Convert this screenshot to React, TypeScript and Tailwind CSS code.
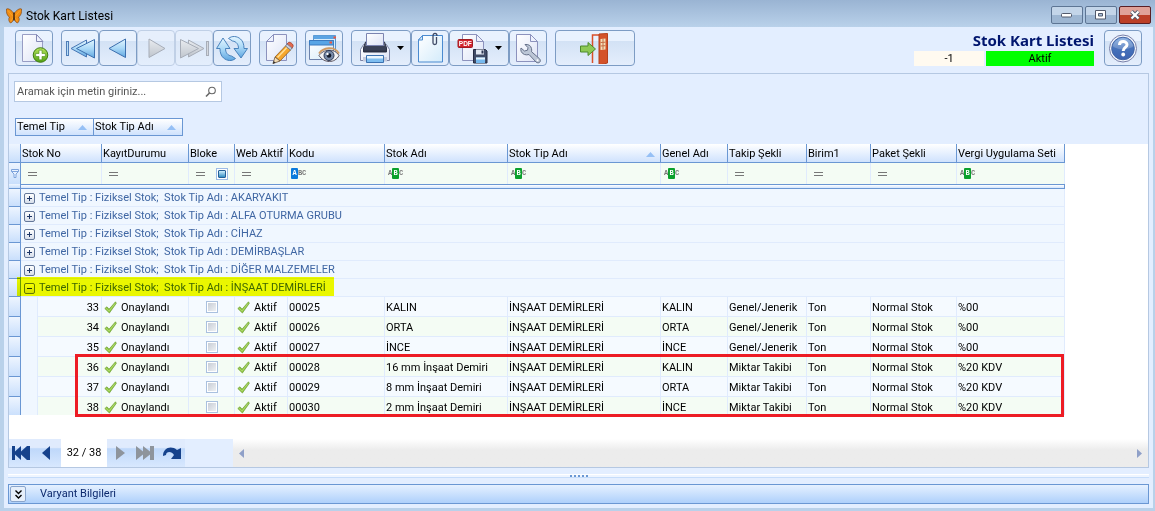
import type { ReactNode } from "react";

const toolButton =
  "flex h-9 items-center justify-center rounded-sm border border-[#7d9cc4] bg-linear-to-b from-[#e9f2fe] from-30% via-[#d3e2f5] via-30% to-[#e4eefc] text-black";
const toolButtonOff =
  "flex h-9 w-[38px] items-center justify-center rounded-sm border border-[#c0d0e6] bg-linear-to-b from-[#e6effc] from-30% via-[#dbe7f7] via-30% to-[#e4eefc]";

function Gradients() {
  return (
    <svg className="absolute size-0" aria-hidden="true">
      <defs>
        <linearGradient id="blue" x1="0" y1="0" x2="0" y2="1">
          <stop offset="0" stopColor="#e4f6ff" />
          <stop offset="0.5" stopColor="#a9d8f7" />
          <stop offset="1" stopColor="#5fa6e0" />
        </linearGradient>
        <linearGradient id="grey" x1="0" y1="0" x2="0" y2="1">
          <stop offset="0" stopColor="#e9ecf0" />
          <stop offset="1" stopColor="#bfc5cd" />
        </linearGradient>
        <linearGradient id="paper" x1="0" y1="0" x2="1" y2="1">
          <stop offset="0" stopColor="#ffffff" />
          <stop offset="1" stopColor="#dde3f6" />
        </linearGradient>
        <linearGradient id="sky" x1="0" y1="0" x2="1" y2="1">
          <stop offset="0" stopColor="#ffffff" />
          <stop offset="1" stopColor="#d3ebfb" />
        </linearGradient>
        <linearGradient id="green" x1="0" y1="0" x2="0" y2="1">
          <stop offset="0" stopColor="#b5e45c" />
          <stop offset="1" stopColor="#52a012" />
        </linearGradient>
        <linearGradient id="dark" x1="0" y1="0" x2="0" y2="1">
          <stop offset="0" stopColor="#7a8296" />
          <stop offset="1" stopColor="#262c40" />
        </linearGradient>
        <linearGradient id="help" x1="0" y1="0" x2="0" y2="1">
          <stop offset="0" stopColor="#7fa9de" />
          <stop offset="0.5" stopColor="#4672bb" />
          <stop offset="1" stopColor="#3d63b0" />
        </linearGradient>
      </defs>
    </svg>
  );
}

function Icon({ children, className = "size-8" }: { children: ReactNode; className?: string }) {
  return (
    <svg viewBox="0 0 32 32" className={className} aria-hidden="true">
      {children}
    </svg>
  );
}

const newIcon = (
  <Icon>
    <path d="M4.500 2.500h14l6 7V29.500h-20z" fill="url(#paper)" stroke="#989dc4" />
    <path d="M18.500 2.500v7h6.500z" fill="#eef2fd" stroke="#8388b5" strokeLinejoin="round" />
    <circle cx="22.500" cy="23" r="7.300" fill="url(#green)" stroke="#3f7d12" />
    <path d="M21 18.200h3v3.300h3.300v3H24v3.300h-3v-3.300h-3.300v-3H21z" fill="#fff" stroke="#4a8d17" strokeWidth=".6" />
  </Icon>
);
const firstIcon = (
  <Icon>
    <rect x="2.500" y="9.500" width="2" height="14" fill="#b9def7" stroke="#4f7db8" />
    <path d="M22.500 8v17L7 16.500z" fill="url(#blue)" stroke="#4877b5" strokeLinejoin="round" />
    <path d="M30.500 7.500v18.500L12.500 16.500z" fill="url(#blue)" stroke="#3c6fae" strokeLinejoin="round" />
  </Icon>
);
const prevIcon = (
  <Icon>
    <path d="M23.500 7v18.500L7 16.500z" fill="url(#blue)" stroke="#3c6fae" strokeLinejoin="round" />
  </Icon>
);
const nextIcon = (
  <Icon>
    <path d="M9 7v18.500L25 16.500z" fill="url(#grey)" stroke="#a7adb8" strokeLinejoin="round" />
  </Icon>
);
const lastIcon = (
  <Icon>
    <rect x="28.500" y="9.500" width="2" height="14" fill="#d4d8de" stroke="#a7adb8" />
    <path d="M10.500 8v17L26 16.500z" fill="url(#grey)" stroke="#a7adb8" strokeLinejoin="round" />
    <path d="M2.500 7.500v18.500L20.500 16.500z" fill="url(#grey)" stroke="#a7adb8" strokeLinejoin="round" />
  </Icon>
);
const refreshIcon = (
  <Icon>
    <g fill="url(#blue)" stroke="#3c78b5" strokeWidth=".9" strokeLinejoin="round">
      <path d="M12.500 6.500C16 3.500 21 4 24.500 7c2.500 2.200 3.500 5.500 3.500 9.500h3.500L25 26l-7-9.500h4.500c0-4-2-7-6-7.500z" />
      <path d="M19.500 26.500c-3.500 3-8.500 2.500-12-.5C5 23.800 4 20.500 4 16.500H.5L7 6l7 10.500H9.500c0 4 2 7 6 7.500z" />
    </g>
  </Icon>
);
const editIcon = (
  <Icon>
    <path d="M11.500 2.500h13V28.500h-20v-19z" fill="url(#paper)" stroke="#8c92bd" />
    <path d="M11.500 2.500v7h-7z" fill="#eef2fd" stroke="#8c92bd" strokeLinejoin="round" />
    <path d="M23.500 14l5 4-10.500 11-5-4z" fill="#f6a62c" stroke="#8b5a1c" strokeWidth=".8" />
    <path d="M25 15.500L15.500 25.500" stroke="#ffe09a" strokeWidth="1.500" />
    <path d="M25 12l1.500-1.500c1.500-1 5.500 2 4.500 4L29.500 17z" fill="#e26a50" stroke="#a23b26" strokeWidth=".8" />
    <path d="M23.500 14l1.500-2 5 4-1.500 2z" fill="#c9d0dc" stroke="#6f7688" strokeWidth=".8" />
    <path d="M13 25l5 4-7 2.500z" fill="#f2dcb5" stroke="#6c5134" strokeWidth=".8" />
    <path d="M11.700 29l2 1.800-3 1z" fill="#333" />
  </Icon>
);
const viewIcon = (
  <Icon>
    <path d="M5.500 3.500h22v20h-22z" fill="#d6ecfb" stroke="#5b93cc" />
    <path d="M5.500 3.500h22v3.500h-22z" fill="#5ba4e3" />
    <path d="M1.500 8.500h24v19h-24z" fill="url(#sky)" stroke="#6d83ad" />
    <path d="M1.500 8.500h24v4.500h-24z" fill="#57a5e6" stroke="#3a7bc0" />
    <path d="M21.500 9.500h2.500v2h-2.500zM25.500 4.500H28v2h-2.500z" fill="#f0543b" />
    <path d="M11 23.500c4-6 15-8 20 0-4 8-15 8-20 0z" fill="#f4f5f8" stroke="#5c5560" />
    <path d="M11 21.500c4-6 15-8 20 0" fill="none" stroke="#cf9a63" strokeWidth="1.800" />
    <circle cx="21" cy="23.500" r="5" fill="#788aa8" stroke="#2c3752" />
    <circle cx="21" cy="23.500" r="2.300" fill="#131a2c" />
    <circle cx="19.500" cy="22" r="1.200" fill="#fff" />
  </Icon>
);
const printIcon = (
  <Icon>
    <path d="M4.500 12.500h23l3 5v11h-29v-11z" fill="url(#paper)" stroke="#7c84a6" />
    <path d="M4 25h24v4.500H4z" fill="#c5cbdd" />
    <path d="M6.500 10h19l2 6v4h-23v-4z" fill="url(#dark)" stroke="#2b3044" />
    <path d="M7.500 1.500h17v12h-17z" fill="url(#paper)" stroke="#7c84b0" />
    <path d="M5 14h22l.5 2.500-2.500 1.500H7l-2.500-1.500z" fill="#3a4157" />
    <path d="M7.500 23.500h17v7h-17z" fill="#7dbdf0" stroke="#3b71b0" />
    <path d="M8 24h16v2.500H8z" fill="#eaf5fe" />
  </Icon>
);
const clipIcon = (
  <Icon>
    <path d="M8.500 3.500h20v26.500h-24v-22z" fill="url(#sky)" stroke="#4b8bd0" />
    <path d="M8.500 3.500v4.500h-4z" fill="#d9edfb" stroke="#4b8bd0" strokeLinejoin="round" />
    <path d="M22.500 5v6c0 2-3.500 2-3.500 0V4c0-3.500 4-3.500 4 0" fill="none" stroke="#3f4a66" strokeWidth="1.300" />
  </Icon>
);
const pdfIcon = (
  <Icon>
    <path d="M5.500 2.500h14l7 7v19h-21z" fill="url(#paper)" stroke="#8c92bd" />
    <path d="M19.500 2.500v7h7z" fill="#eef2fd" stroke="#8c92bd" strokeLinejoin="round" />
    <rect x="1" y="7.500" width="14.500" height="8" rx="1" fill="#d2232c" stroke="#9f1b22" />
    <text x="8.300" y="14" textAnchor="middle" fontFamily="Liberation Sans" fontWeight="700" fontSize="6.500" fill="#fff">
      PDF
    </text>
    <path d="M16.500 17.500h12l1.500 1.500v12h-13.500z" fill="#414b66" stroke="#252c43" />
    <path d="M19 17.500h8v5h-8z" fill="#e3e8f2" />
    <path d="M24.500 18.500h2v3h-2z" fill="#2c3550" />
    <path d="M19 25.500h9v5.500h-9z" fill="#76b9ee" />
    <path d="M19 25.500h9v2h-9z" fill="#e5f3fd" />
  </Icon>
);
const toolsIcon = (
  <Icon>
    <path d="M4.500 2.500h14l7 7V29.500h-21z" fill="url(#paper)" stroke="#8c92bd" />
    <path d="M18.500 2.500v7h7z" fill="#eef2fd" stroke="#8c92bd" strokeLinejoin="round" />
    <path
      d="M13 12.500c3-.5 6 1 6.500 4 .3 1.200.2 2.200 0 3.200l8 7c2.500 3-1 5.500-3.500 3.300l-7-7.500c-3 1-6.500 0-7.800-3-.5-1-.5-2.500-.2-3.500l3.500 3 3-.8.500-2.500z"
      fill="#bcc6d6"
      stroke="#66718a"
      strokeLinejoin="round"
    />
    <circle cx="25.500" cy="28.300" r="1" fill="#fff" />
  </Icon>
);
const exitIcon = (
  <Icon>
    <path d="M13.500 31V3h7" fill="none" stroke="#d9502a" strokeWidth="1.500" />
    <path d="M20 2l8.500-.5v29.500l-8.500 2z" fill="#d4532a" stroke="#b5401d" />
    <path d="M21.500 7l5-.5v11l-5 .5z" fill="#f3dfba" />
    <path d="M24 6.500v11M21.500 10.500l5-.3M21.500 14l5-.3" stroke="#c56d44" />
    <path d="M1.500 14h7.500v-3.500l7.500 6.500-7.500 6.500V20h-7.500z" fill="#8dc955" stroke="#4d8a2c" strokeLinejoin="round" />
  </Icon>
);
const helpIcon = (
  <Icon>
    <circle cx="16" cy="16.500" r="13.500" fill="#f4f7fd" stroke="#777fa8" />
    <circle cx="16" cy="16.500" r="11.300" fill="url(#help)" stroke="#4466a6" />
    <path d="M5.500 14a11 11 0 0 1 21 0c-5 4-15 5-21 0z" fill="#fff" opacity=".2" />
    <path d="M12.500 13c0-4.500 7.500-4.500 7.500-.3 0 2.800-3.800 2.800-3.800 6.300" fill="none" stroke="#fff" strokeWidth="3" />
    <circle cx="16.200" cy="22.500" r="1.900" fill="#fff" />
  </Icon>
);

const Caret = () => (
  <svg viewBox="0 0 7 4" className="h-1 w-[7px]" aria-hidden="true">
    <path d="M0 0h7L3.500 4z" fill="#000" />
  </svg>
);

function Tool({ label, children, wide = "w-[38px]" }: { label: string; children: ReactNode; wide?: string }) {
  return (
    <button type="button" aria-label={label} className={`${toolButton} ${wide}`}>
      {children}
    </button>
  );
}

const SortArrow = () => (
  <svg viewBox="0 0 9 5" className="h-[5px] w-[9px] shrink-0" aria-hidden="true">
    <path d="M4.500 0L9 5H0z" fill="#96c0f5" />
  </svg>
);

const Equals = () => (
  <svg viewBox="0 0 9 4" className="h-1 w-[9px]" aria-hidden="true">
    <path d="M0 .5h9M0 3.500h9" stroke="#777" />
  </svg>
);

function Abc({ start = false }: { start?: boolean }) {
  const plain = "w-1 text-center text-[#777]";
  return (
    <span className="flex h-[11px] items-center font-['Liberation_Mono'] text-[7px] leading-[11px] font-bold">
      <span className={start ? "w-[7px] rounded-[1px] bg-[#0b7bdc] text-center text-white" : plain}>A</span>
      <span className={start ? plain : "w-[7px] rounded-[1px] bg-[#0ba02c] text-center text-white"}>B</span>
      <span className={plain}>C</span>
    </span>
  );
}

const Tick = () => (
  <svg viewBox="0 0 13 13" className="size-[13px] shrink-0" aria-hidden="true">
    <path d="M.8 7.500L3 5.800l2 2.400L11.500.8l.8 1.500L5.400 12z" fill="#8dc63f" stroke="#6d9f35" strokeWidth=".7" strokeLinejoin="round" />
    <path d="M2 7.200l3 3L11 2.500" fill="none" stroke="#bfe07f" strokeWidth=".7" />
  </svg>
);

type Column = { title: string; filter: "eq" | "box" | "abc" | "start"; sorted?: boolean; span?: number };

const columns: Column[] = [
  { title: "Stok No", filter: "eq", span: 2 },
  { title: "KayıtDurumu", filter: "eq" },
  { title: "Bloke", filter: "box" },
  { title: "Web Aktif", filter: "eq" },
  { title: "Kodu", filter: "start" },
  { title: "Stok Adı", filter: "abc" },
  { title: "Stok Tip Adı", filter: "abc", sorted: true },
  { title: "Genel Adı", filter: "abc" },
  { title: "Takip Şekli", filter: "eq" },
  { title: "Birim1", filter: "eq" },
  { title: "Paket Şekli", filter: "eq" },
  { title: "Vergi Uygulama Seti", filter: "abc" },
];

const groups = ["AKARYAKIT", "ALFA OTURMA GRUBU", "CİHAZ", "DEMİRBAŞLAR", "DİĞER MALZEMELER", "İNŞAAT DEMİRLERİ"];

const rows = [
  { no: 33, code: "00025", name: "KALIN", general: "KALIN", track: "Genel/Jenerik", tax: "%00" },
  { no: 34, code: "00026", name: "ORTA", general: "ORTA", track: "Genel/Jenerik", tax: "%00" },
  { no: 35, code: "00027", name: "İNCE", general: "İNCE", track: "Genel/Jenerik", tax: "%00" },
  { no: 36, code: "00028", name: "16 mm İnşaat Demiri", general: "KALIN", track: "Miktar Takibi", tax: "%20 KDV" },
  { no: 37, code: "00029", name: "8 mm İnşaat Demiri", general: "ORTA", track: "Miktar Takibi", tax: "%20 KDV" },
  { no: 38, code: "00030", name: "2 mm İnşaat Demiri", general: "İNCE", track: "Miktar Takibi", tax: "%20 KDV" },
];

const indicator = "border-r border-b border-[#6a97d3] bg-linear-to-b from-[#eef5ff] to-[#c9dffc] p-0";
const cell = "border-r border-b border-[#e0ebfd] pt-0.5 pr-0.5 pb-0 pl-px whitespace-nowrap";

function Grid() {
  return (
    <table className="w-[1056px] table-fixed border-separate border-spacing-0 leading-4">
      <colgroup>
        <col className="w-3" />
        <col className="w-[17px]" />
        <col className="w-16" />
        <col className="w-[87px]" />
        <col className="w-[46px]" />
        <col className="w-[53px]" />
        <col className="w-[97px]" />
        <col className="w-[123px]" />
        <col className="w-[153px]" />
        <col className="w-[67px]" />
        <col className="w-[79px]" />
        <col className="w-16" />
        <col className="w-[86px]" />
        <col className="w-[108px]" />
      </colgroup>
      <thead>
        <tr className="h-[19px]">
          <td className={indicator} />
          {columns.map((c) => (
            <th
              key={c.title}
              scope="col"
              colSpan={c.span}
              className="border-r border-b border-[#6a97d3] bg-linear-to-b from-white to-[#cfe2fd] px-px pt-0.5 pb-0 text-left font-normal whitespace-nowrap"
            >
              <span className="flex items-center justify-between pr-1">
                {c.title}
                {c.sorted && <SortArrow />}
              </span>
            </th>
          ))}
        </tr>
        <tr className="h-[21px]">
          <td className="border-r border-[#6a97d3] bg-linear-to-b from-[#eef5ff] to-[#c9dffc] p-0">
            <svg viewBox="0 0 8 9" className="ml-0.5 h-[9px] w-2" aria-hidden="true">
              <path d="M.5.5h7v2L5 5v3.500H3V5L.5 2.500zM.5 2.500h7" fill="#e9f2ff" stroke="#7ea4dc" />
            </svg>
          </td>
          {columns.map((c) => (
            <td key={c.title} colSpan={c.span} className="border-r border-[#e0ebfd] bg-[#f4fcf4] py-0 pr-1.5 pl-[3px]">
              <span className="flex items-center justify-between">
                {c.filter === "abc" || c.filter === "start" ? (
                  <Abc start={c.filter === "start"} />
                ) : (
                  <span className="pl-1">
                    <Equals />
                  </span>
                )}
                {c.filter === "box" && (
                  <span className="flex size-3 items-center justify-center border border-[#9dbce6] bg-white">
                    <span className="size-2 rounded-[1px] border border-[#255f96] bg-linear-to-b from-[#cdeffc] to-[#2c8fc4]" />
                  </span>
                )}
              </span>
            </td>
          ))}
        </tr>
        <tr className="h-[5px]">
          <td className={indicator} />
          <td colSpan={13} className="border border-l-0 border-[#6a97d3] bg-linear-to-b from-white to-[#d3e5fd] p-0" />
        </tr>
      </thead>
      <tbody>
        {groups.map((g, i) => {
          const open = i === groups.length - 1;
          return (
            <tr key={g} className="h-[18px]">
              <td className={indicator} />
              <td colSpan={13} className="relative border-r border-b border-[#e0ebfd] bg-[#f0f7ff] pt-px pr-0 pb-0 pl-[3px] text-[#3f66a3]">
                <span className="flex items-center gap-1">
                  <button
                    type="button"
                    aria-label={open ? "Daralt" : "Genişlet"}
                    aria-expanded={open}
                    className="flex size-[11px] items-center justify-center rounded-xs border border-[#64789a] bg-linear-to-b from-white to-[#d7dfeb]"
                  >
                    <svg viewBox="0 0 5 5" className="size-[5px]" aria-hidden="true">
                      <path d={open ? "M0 2.500h5" : "M0 2.500h5M2.500 0v5"} stroke="#1c3566" />
                    </svg>
                  </button>
                  <span className="whitespace-pre">{`Temel Tip : Fiziksel Stok;  Stok Tip Adı : ${g}`}</span>
                </span>
                {open && <span className="absolute -top-0.5 -left-1 h-[19px] w-[317px] bg-[#f9ff00] mix-blend-multiply" />}
              </td>
            </tr>
          );
        })}
        {rows.map((r, i) => (
          <tr key={r.no} className={i % 2 ? "h-5 bg-[#f4fcf4]" : "h-5 bg-[#f5faff]"}>
            <td className={indicator} />
            <td className="border-r border-[#e0ebfd] bg-[#f0f7ff] p-0" />
            <td className={`${cell} text-right`}>{r.no}</td>
            <td className={cell}>
              <span className="flex items-center gap-1 pl-px">
                <Tick />
                Onaylandı
              </span>
            </td>
            <td className="border-r border-b border-[#e0ebfd] p-0">
              <input
                type="checkbox"
                aria-label={`Bloke ${r.no}`}
                className="mx-auto block size-3 appearance-none border border-[#a9c0df] bg-linear-to-br from-[#c3c9d2] to-[#f3f5f8] shadow-[inset_0_0_0_1px_#fff]"
              />
            </td>
            <td className={cell}>
              <span className="flex items-center gap-1 pl-px">
                <Tick />
                Aktif
              </span>
            </td>
            <td className={cell}>{r.code}</td>
            <td className={cell}>{r.name}</td>
            <td className={cell}>İNŞAAT DEMİRLERİ</td>
            <td className={cell}>{r.general}</td>
            <td className={cell}>{r.track}</td>
            <td className={cell}>Ton</td>
            <td className={cell}>Normal Stok</td>
            <td className={cell}>{r.tax}</td>
          </tr>
        ))}
      </tbody>
    </table>
  );
}

function NavButton({ label, children, off = false }: { label: string; children: ReactNode; off?: boolean }) {
  return (
    <button type="button" aria-label={label} disabled={off} className="flex h-full w-[26px] items-center justify-center">
      <svg viewBox="0 0 20 14" className="h-3.5 w-5" fill={off ? "#8e949c" : "#16428c"} aria-hidden="true">
        {children}
      </svg>
    </button>
  );
}

const navStrip = "flex bg-linear-to-b from-[#e0ebfd] from-30% via-[#bfd8fa] via-35% to-[#d8e8fe]";
const windowButton = "flex h-[18px] w-8 items-center justify-center rounded-xs border";

export default function App() {
  return (
    <div className="flex min-h-screen flex-col bg-linear-to-b from-[#9ab4d3] to-[#b9d1ea] to-[27px] pr-0.5 pb-[3px] pl-1 font-['Roboto',sans-serif] text-[11px] text-black">
      <Gradients />
      <header className="flex h-[27px] items-center justify-between px-0.5">
        <div className="flex items-center gap-1 pt-1 text-xs">
          <svg viewBox="0 0 16 16" className="size-4" aria-hidden="true">
            <path d="M8 6C6 2 2 0 .5 1c-.5 3 .5 7 3 8-1.500 2-.5 5 1 6 2-.5 3-3 3.500-6 .5 3 1.500 5.500 3.500 6 1.500-1 2.500-4 1-6 2.500-1 3.500-5 3-8C14 0 10 2 8 6z" fill="#f08c16" stroke="#7a3d08" strokeWidth=".6" />
            <path d="M2 2.500l5 6M14 2.500l-5 6M5 13l2.500-4M11 13L8.500 9" stroke="#ffb52e" strokeWidth=".6" />
            <path d="M8 4.500v8" stroke="#3a1f0a" strokeWidth="1.400" />
          </svg>
          <h1>Stok Kart Listesi</h1>
        </div>
        <div className="flex gap-0.5 pt-[3px]">
          <button type="button" aria-label="Simge durumuna küçült" className={`${windowButton} border-[#5d7594] bg-linear-to-b from-[#c3d5e9] from-50% to-[#9db6d2] to-50%`}>
            <svg viewBox="0 0 12 6" className="h-1.5 w-3" aria-hidden="true">
              <rect x=".5" y="1.500" width="10" height="3.500" rx="1" fill="#fff" stroke="#525a6c" />
            </svg>
          </button>
          <button type="button" aria-label="Ekranı kapla" className={`${windowButton} border-[#5d7594] bg-linear-to-b from-[#c3d5e9] from-50% to-[#9db6d2] to-50%`}>
            <svg viewBox="0 0 12 10" className="h-2.5 w-3" aria-hidden="true">
              <path d="M.5.5h10v8.500H.5z" fill="#fff" stroke="#525a6c" />
              <path d="M3.500 3.500h4v2.500h-4z" fill="#a9c0da" stroke="#525a6c" />
            </svg>
          </button>
          <button type="button" aria-label="Kapat" className={`${windowButton} border-[#5a1f24] bg-linear-to-b from-[#e0a298] from-50% to-[#bc3f27] to-50%`}>
            <svg viewBox="0 0 12 10" className="h-2.5 w-3" aria-hidden="true">
              <path d="M2.500 1.500l7 7M9.500 1.500l-7 7" stroke="#525a6c" strokeWidth="4" />
              <path d="M2.500 1.500l7 7M9.500 1.500l-7 7" stroke="#fff" strokeWidth="2.200" />
            </svg>
          </button>
        </div>
      </header>

      <main className="flex flex-1 flex-col bg-[#e3eeff] px-1 pt-[3px] pb-1">
        <div className="flex items-start justify-between px-[7px]">
          <div className="flex gap-2">
            <Tool label="Yeni">{newIcon}</Tool>
            <div className="flex">
              <Tool label="İlk kayıt">{firstIcon}</Tool>
              <Tool label="Önceki kayıt">{prevIcon}</Tool>
              <button type="button" disabled aria-label="Sonraki kayıt" className={toolButtonOff}>
                {nextIcon}
              </button>
              <button type="button" disabled aria-label="Son kayıt" className={toolButtonOff}>
                {lastIcon}
              </button>
              <Tool label="Yenile">{refreshIcon}</Tool>
            </div>
            <Tool label="Düzenle">{editIcon}</Tool>
            <Tool label="Görünüm">{viewIcon}</Tool>
            <div className="flex">
              <Tool label="Yazdır" wide="w-[60px] gap-1.5">
                {printIcon}
                <Caret />
              </Tool>
              <Tool label="Ekler">{clipIcon}</Tool>
              <Tool label="PDF kaydet" wide="w-[60px] gap-1.5">
                {pdfIcon}
                <Caret />
              </Tool>
              <Tool label="Ayarlar">{toolsIcon}</Tool>
            </div>
            <Tool label="Çıkış" wide="w-20">
              {exitIcon}
            </Tool>
          </div>
          <div className="flex gap-2.5">
            <div className="flex flex-col items-end">
              <h2 className="h-[21px] font-['Noto_Sans',sans-serif] text-[15px] leading-[21px] font-bold text-[#00156e]">Stok Kart Listesi</h2>
              <div className="flex gap-0.5 text-center leading-4">
                <span className="h-[15px] w-[70px] bg-[#fffaf0]">-1</span>
                <span className="h-[15px] w-[108px] bg-[#00ff00]">Aktif</span>
              </div>
            </div>
            <Tool label="Yardım">{helpIcon}</Tool>
          </div>
        </div>

        <section className="mt-[7px] flex flex-1 flex-col border border-[#b5c8e2]">
          <div className="flex flex-col items-start gap-4 px-[5px] pt-[7px] pb-2">
            <label className="flex h-[21px] w-[208px] items-center border border-[#b5c8e2] bg-white pr-1 pl-0.5">
              <input type="text" aria-label="Ara" placeholder="Aramak için metin giriniz..." className="min-w-0 flex-1 pt-px outline-none placeholder:text-[#555]" />
              <svg viewBox="0 0 12 12" className="size-3" fill="none" stroke="#666" strokeWidth="1.100" aria-hidden="true">
                <circle cx="7" cy="4.500" r="3.300" />
                <path d="M4.500 7L1 10.500" strokeWidth="1.600" />
              </svg>
            </label>
            <div className="ml-px flex h-[18px] border border-[#6a97d3] bg-linear-to-b from-white to-[#cfe2fd]">
              <button type="button" className="flex w-[78px] items-center justify-between border-r border-[#6a97d3] pt-px pr-1.5 pl-px">
                Temel Tip
                <SortArrow />
              </button>
              <button type="button" className="flex w-[88px] items-center justify-between pt-px pr-1.5 pl-px">
                Stok Tip Adı
                <SortArrow />
              </button>
            </div>
          </div>

          <div className="relative flex-1 bg-white pb-6">
            <div className="max-h-[271px] overflow-hidden">
              <Grid />
            </div>
            <div className="pointer-events-none absolute top-[210px] left-[66px] h-[63px] w-[989px] border-3 border-[#ed1c24]" />
          </div>

          <div className="flex h-7">
            <div className={navStrip}>
              <NavButton label="İlk">
                <path d="M0 0h3v5.500L9 0v5.500L15 0h3v14h-3l-6-5.500V14L3 8.500V14H0z" />
              </NavButton>
              <NavButton label="Önceki">
                <path d="M12 0v14L4 7z" />
              </NavButton>
            </div>
            <span className="w-[46px] bg-white text-center leading-7">32 / 38</span>
            <div className={navStrip}>
              <NavButton label="Sonraki" off>
                <path d="M6 0v14l9-7z" />
              </NavButton>
              <NavButton label="Son" off>
                <path d="M0 0v14l7-5.500V14l7-5.500V14h4V0h-4v5.500L7 0v5.500z" />
              </NavButton>
              <NavButton label="Git">
                <path d="M1 10C1 2 9-1 15 4l4-2v11H9l3-4C10 5 4 5 4 9z" />
              </NavButton>
            </div>
            <div className="ml-12 flex flex-1 items-center justify-between bg-linear-to-b from-white to-[#ececec] to-40% px-1.5">
              <button type="button" aria-label="Sola kaydır">
                <svg viewBox="0 0 5 9" className="h-[9px] w-[5px]" aria-hidden="true">
                  <path d="M5 0v9L0 4.500z" fill="#8fa0c8" />
                </svg>
              </button>
              <button type="button" aria-label="Sağa kaydır">
                <svg viewBox="0 0 5 9" className="h-[9px] w-[5px]" aria-hidden="true">
                  <path d="M0 0v9l5-4.500z" fill="#8fa0c8" />
                </svg>
              </button>
            </div>
          </div>
        </section>

        <div className="my-1.5 flex h-1 items-center justify-center gap-0.5 border-t border-b border-t-white border-b-[#c5dcfa] bg-[#eef5ff]">
          <span className="size-0.5 bg-[#6a97d3]" />
          <span className="size-0.5 bg-[#6a97d3]" />
          <span className="size-0.5 bg-[#6a97d3]" />
          <span className="size-0.5 bg-[#6a97d3]" />
          <span className="size-0.5 bg-[#6a97d3]" />
        </div>

        <section className="flex h-5 items-center gap-3.5 border border-[#6a97d3] bg-linear-to-b from-[#e6f1ff] to-[#aed0fb] pl-px">
          <button type="button" aria-label="Varyant Bilgilerini aç" className="flex size-4 items-center justify-center rounded-xs border border-[#8aa5cc] bg-[#e6effb]">
            <svg viewBox="0 0 7 9" className="h-[9px] w-[7px]" fill="none" stroke="#000" strokeWidth="1.400" aria-hidden="true">
              <path d="M.5.5l3 3 3-3M.5 5l3 3 3-3" />
            </svg>
          </button>
          <h3 className="pt-px text-[#0d2a6e]">Varyant Bilgileri</h3>
        </section>
      </main>
    </div>
  );
}
